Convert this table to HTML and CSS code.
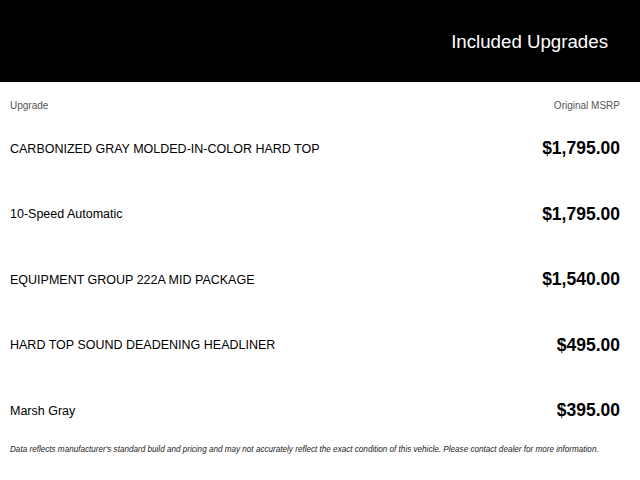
FILE: index.html
```html
<!DOCTYPE html>
<html>
<head>
<meta charset="utf-8">
<link rel="stylesheet" href="styles.css">
</head>
<body>
<header class="banner"><h1 class="title">Included Upgrades</h1></header>
<main class="content">
  <div class="colhead"><span>Upgrade</span><span>Original MSRP</span></div>
  <div class="row"><span class="name">CARBONIZED GRAY MOLDED-IN-COLOR HARD TOP</span><span class="price">$1,795.00</span></div>
  <div class="row"><span class="name">10-Speed Automatic</span><span class="price">$1,795.00</span></div>
  <div class="row"><span class="name">EQUIPMENT GROUP 222A MID PACKAGE</span><span class="price">$1,540.00</span></div>
  <div class="row"><span class="name">HARD TOP SOUND DEADENING HEADLINER</span><span class="price">$495.00</span></div>
  <div class="row"><span class="name">Marsh Gray</span><span class="price">$395.00</span></div>
  <p class="note">Data reflects manufacturer's standard build and pricing and may not accurately reflect the exact condition of this vehicle. Please contact dealer for more information.</p>
</main>
</body>
</html>
```
FILE: styles.css
```css
html, body { margin: 0; padding: 0; background: #fff; }
body { font-family: "Liberation Sans", Arial, sans-serif; color: #000; }
.banner {
  box-sizing: border-box;
  height: 82px;
  background: #000;
  display: flex;
  justify-content: flex-end;
  align-items: center;
  padding: 1px 32px 0 0;
}
.title { margin: 0; font-size: 18.7px; font-weight: normal; color: #fff; }
.content { padding: 0 20px 0 10px; }
.colhead {
  display: flex; justify-content: space-between; align-items: flex-start;
  box-sizing: border-box; height: 34px; padding-top: 17px;
  font-size: 10px; line-height: 14px; color: #555;
}
.row {
  display: flex; justify-content: space-between; align-items: center;
  height: 65.5px;
}
.name { font-size: 12.5px; }
.price { font-size: 17.5px; font-weight: bold; }
.note { margin: 0; font-size: 8.15px; line-height: 11px; font-style: italic; color: #222; }
```
